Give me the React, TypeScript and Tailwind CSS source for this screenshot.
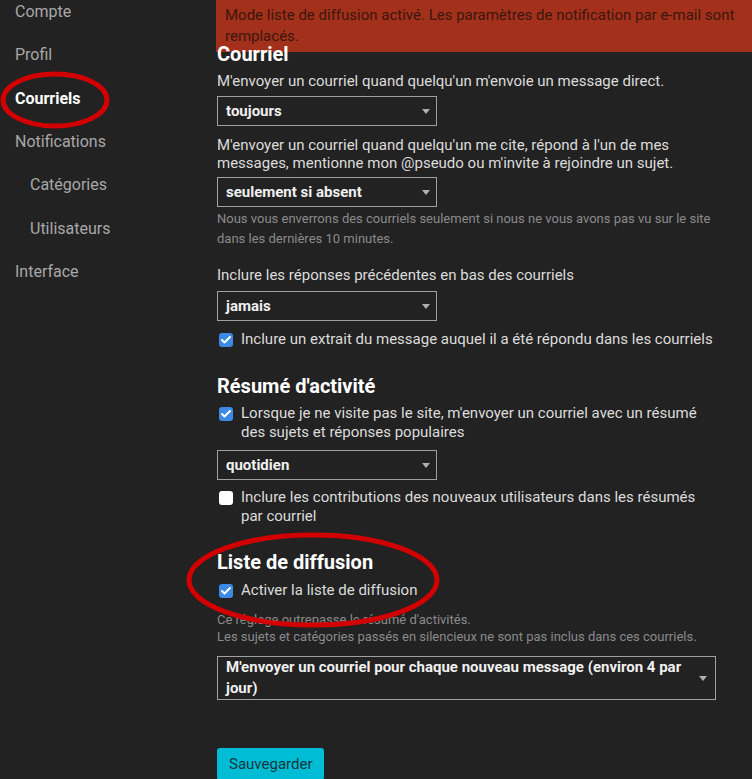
import { Check } from "lucide-react"

function Select({ value, wide }: { value: string; wide?: boolean }) {
  if (wide) {
    return (
      <div className="mt-[11px] flex h-[44px] w-[499px] items-center justify-between border border-[#a0a0a0] pl-[8px] pr-[8px]">
        <span className="text-[15px] leading-[21px] font-bold text-[#f0f0f0]">{value}</span>
        <span className="h-0 w-0 border-x-[4.5px] border-t-[5px] border-x-transparent border-t-[#b0b0b0]" />
      </div>
    )
  }
  return (
    <div className="flex h-[30px] w-[220px] items-center justify-between border border-[#a0a0a0] pl-[8px] pr-[6px]">
      <span className="text-[15px] font-bold text-[#f0f0f0]">{value}</span>
      <span className="h-0 w-0 border-x-[4.5px] border-t-[5px] border-x-transparent border-t-[#b0b0b0]" />
    </div>
  )
}

function CheckRow({ checked, children, className }: { checked: boolean; children: React.ReactNode; className?: string }) {
  return (
    <div className={"flex items-start " + (className ?? "")}>
      <span
        className={
          "ml-[2px] mt-[3px] flex h-[14px] w-[14px] shrink-0 items-center justify-center rounded-[3px] " +
          (checked ? "bg-[#3c8ae6]" : "bg-white")
        }
      >
        {checked && <Check size={12} strokeWidth={4} color="white" />}
      </span>
      <span className="ml-[8px] text-[15px] leading-[19px] text-[#dcdcdc]">{children}</span>
    </div>
  )
}

export default function App() {
  const nav = [
    { label: "Compte" },
    { label: "Profil" },
    { label: "Courriels", active: true },
    { label: "Notifications" },
    { label: "Catégories", sub: true },
    { label: "Utilisateurs", sub: true },
    { label: "Interface" },
  ]

  return (
    <div className="relative h-[779px] w-[752px] overflow-hidden bg-[#222222] font-['Roboto',sans-serif]">
      <div className="flex">
        <nav className="mt-[-9.6px] w-[216px] shrink-0">
          {nav.map((item) => (
            <div
              key={item.label}
              className={
                "flex h-[43.3px] items-center text-[16px] " +
                (item.sub ? "pl-[30px] " : "pl-[15px] ") +
                (item.active ? "font-bold text-white" : "text-[#a8a8a8]")
              }
            >
              {item.label}
            </div>
          ))}
        </nav>

        <main className="flex-1">
          <div className="h-[52px] bg-[#a3301a] px-[9px] pt-[5px] text-[15px] leading-[21px] text-[#3a170f]">
            Mode liste de diffusion activé. Les paramètres de notification par e-mail sont remplacés.
          </div>

          <div className="relative pl-px">
            <h2 className="mt-[-10px] text-[20px] leading-[24px] font-bold text-white">Courriel</h2>
            <p className="mt-[6px] text-[15px] leading-[18px] text-[#dcdcdc]">
              M'envoyer un courriel quand quelqu'un m'envoie un message direct.
            </p>
            <div className="mt-[6px]">
              <Select value="toujours" />
            </div>
            <p className="mt-[10px] w-[510px] text-[15px] leading-[18px] text-[#dcdcdc]">
              M'envoyer un courriel quand quelqu'un me cite, répond à l'un de mes messages, mentionne mon @pseudo ou
              m'invite à rejoindre un sujet.
            </p>
            <div className="mt-[5px]">
              <Select value="seulement si absent" />
            </div>
            <p className="mt-[2px] w-[500px] text-[13px] leading-[20px] text-[#8a8a8a]">
              Nous vous enverrons des courriels seulement si nous ne vous avons pas vu sur le site dans les dernières 10
              minutes.
            </p>
            <p className="mt-[17px] text-[15px] leading-[18px] text-[#dcdcdc]">
              Inclure les réponses précédentes en bas des courriels
            </p>
            <div className="mt-[7px]">
              <Select value="jamais" />
            </div>
            <CheckRow checked className="mt-[9px]">
              Inclure un extrait du message auquel il a été répondu dans les courriels
            </CheckRow>

            <h2 className="mt-[25px] text-[20px] leading-[24px] font-bold text-white">Résumé d'activité</h2>
            <CheckRow checked className="mt-[6px] w-[500px]">
              Lorsque je ne visite pas le site, m'envoyer un courriel avec un résumé des sujets et réponses populaires
            </CheckRow>
            <div className="mt-[8px]">
              <Select value="quotidien" />
            </div>
            <CheckRow checked={false} className="mt-[8px] w-[500px]">
              Inclure les contributions des nouveaux utilisateurs dans les résumés par courriel
            </CheckRow>

            <h2 className="mt-[24px] text-[20px] leading-[24px] font-bold text-white">Liste de diffusion</h2>
            <CheckRow checked className="mt-[7px]">
              Activer la liste de diffusion
            </CheckRow>
            <p className="mt-[11px] text-[13px] leading-[17px] text-[#8a8a8a]">
              Ce réglage outrepasse le résumé d'activités.
              <br />
              Les sujets et catégories passés en silencieux ne sont pas inclus dans ces courriels.
            </p>
            <Select wide value="M'envoyer un courriel pour chaque nouveau message (environ 4 par jour)" />

            <button className="mt-[48px] h-[32px] rounded-[3px] bg-[#00bcd4] px-[12px] text-[15px] text-[#15373d]">
              Sauvegarder
            </button>
          </div>
        </main>
      </div>

      <svg className="pointer-events-none absolute inset-0" width="752" height="779">
        <ellipse cx="55" cy="100" rx="52" ry="26" fill="none" stroke="#d20000" strokeWidth="5" />
        <ellipse cx="313" cy="580" rx="124" ry="45" fill="none" stroke="#d20000" strokeWidth="5" />
      </svg>
    </div>
  )
}
